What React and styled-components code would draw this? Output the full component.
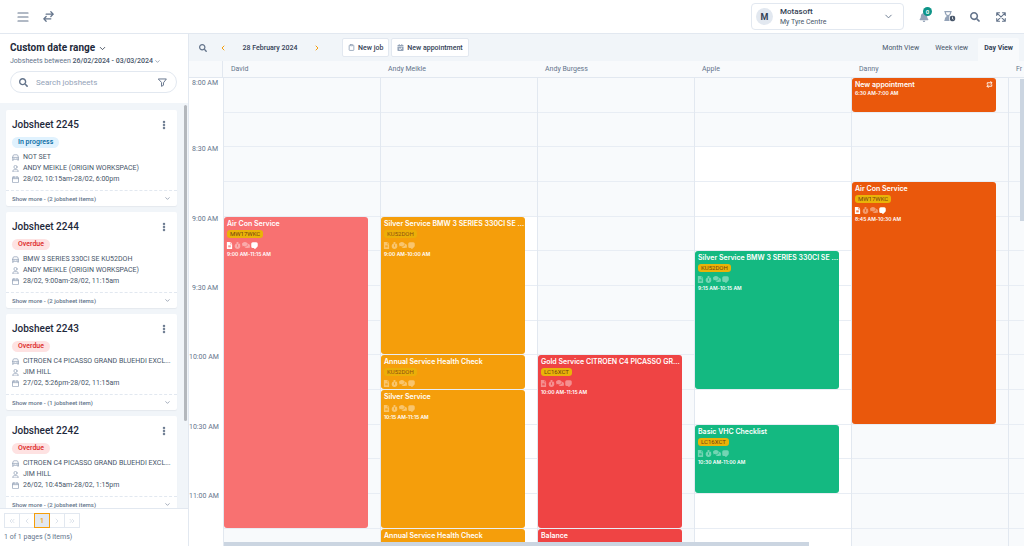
import React from 'react';
import styled, { createGlobalStyle } from 'styled-components';
import {
  FaSearch,
  FaBell,
  FaFileAlt,
  FaComments,
  FaCalendarCheck,
  FaStopwatch,
  FaHourglassEnd,
  FaClock,
} from 'react-icons/fa';
import {
  ChevronDown,
  ChevronLeft,
  ChevronRight,
  ChevronsLeft,
  ChevronsRight,
  Clipboard,
  EllipsisVertical,
} from 'lucide-react';

const colors = {
  text: '#334155',
  muted: '#64748b',
  light: '#94a3b8',
  line: '#e2e8f0',
  panel: '#f1f5f9',
  page: '#f8fafc',
  accent: '#f59e0b',
};

const GlobalStyle = createGlobalStyle`
  * {
    box-sizing: border-box;
  }
  body {
    margin: 0;
    font-family: Roboto, 'Liberation Sans', sans-serif;
    font-size: 7px;
    color: ${colors.text};
    background: #fff;
  }
  button, input {
    font: inherit;
    color: inherit;
    padding: 0;
    border: 0;
    background: none;
  }
  h1, h2, p {
    margin: 0;
  }
  svg {
    display: block;
    flex: none;
  }
`;

const Root = styled.div`
  display: flex;
  flex-direction: column;
  height: 100vh;
  overflow: hidden;
`;

const Topbar = styled.header`
  display: flex;
  align-items: center;
  flex: none;
  height: 34px;
  padding: 0 18px 0 17px;
  border-bottom: 1px solid ${colors.line};
`;

const IconButton = styled.button`
  display: flex;
  align-items: center;
  justify-content: center;
  color: ${p => p.$color || colors.muted};
  margin-left: ${p => p.$gap || 0}px;
`;

const Workspace = styled.button`
  display: flex;
  align-items: center;
  width: 153px;
  height: 27px;
  margin-left: auto;
  padding: 0 9px 0 4px;
  text-align: left;
  border: 1px solid ${colors.line};
  border-radius: 4px;
`;

const Avatar = styled.span`
  display: flex;
  align-items: center;
  justify-content: center;
  width: 17px;
  height: 17px;
  margin-right: 7px;
  border-radius: 50%;
  background: ${colors.line};
  font-size: 9px;
  font-weight: 700;
`;

const WorkspaceText = styled.span`
  display: flex;
  flex: 1;
  flex-direction: column;
  line-height: 10px;
`;

const WorkspaceName = styled.span`
  font-size: 8px;
  font-weight: 500;
`;

const WorkspaceBranch = styled.span`
  font-size: 7px;
  color: #475569;
`;

const BellWrap = styled.span`
  position: relative;
  color: ${colors.light};
`;

const BellBadge = styled.span`
  position: absolute;
  top: -5px;
  left: 4px;
  width: 9px;
  height: 9px;
  border-radius: 50%;
  background: #0d9488;
  color: #fff;
  font-size: 6px;
  font-weight: 600;
  line-height: 9px;
  text-align: center;
`;

const Body = styled.div`
  display: flex;
  flex: 1;
  min-height: 0;
`;

const Sidebar = styled.aside`
  display: flex;
  flex-direction: column;
  flex: none;
  width: 189px;
  border-right: 1px solid ${colors.line};
`;

const SidebarHead = styled.div`
  padding: 7px 11px 10px 10px;
`;

const RangeTitle = styled.h1`
  display: flex;
  align-items: center;
  gap: 3px;
  font-size: 10px;
  font-weight: 700;
  line-height: 14px;
  color: #1e293b;
`;

const RangeText = styled.p`
  display: flex;
  align-items: center;
  gap: 1px;
  margin-bottom: 3px;
  line-height: 13px;
  white-space: pre;
  color: ${colors.muted};

  b {
    font-weight: 500;
    color: #475569;
  }
`;

const SearchBox = styled.label`
  display: flex;
  align-items: center;
  gap: 8px;
  height: 22px;
  padding: 0 9px 0 8px;
  border: 1px solid ${colors.line};
  border-radius: 11px;
  color: ${colors.muted};
`;

const SearchInput = styled.input`
  flex: 1;
  min-width: 0;
  font-size: 8px;
  outline: none;

  &::placeholder {
    color: ${colors.light};
  }
`;

const ListArea = styled.div`
  display: flex;
  flex: 1;
  min-height: 0;
  background: ${colors.panel};
`;

const List = styled.div`
  display: flex;
  flex: 1;
  flex-direction: column;
  gap: 6px;
  min-width: 0;
  padding: 7px 7px 0 6px;
  overflow: hidden;
`;

const ListThumb = styled.div`
  width: 3px;
  height: 78%;
  margin: 2px 1px 0 0;
  border-radius: 2px;
  background: #b4b8bd;
`;

const Card = styled.article`
  flex: none;
  background: #fff;
  border-radius: 2px;
  box-shadow: 0 1px 1px rgba(15, 23, 42, 0.05);
`;

const CardBody = styled.div`
  padding: 8px 6px 5px;
`;

const CardHead = styled.div`
  display: flex;
  align-items: center;
  justify-content: space-between;
  padding-right: 2px;
`;

const CardTitle = styled.h2`
  font-size: 10px;
  font-weight: 500;
  line-height: 14px;
  color: #1e293b;
`;

const Badge = styled.span`
  display: block;
  width: fit-content;
  margin: 5px 0 4px;
  padding: 0 6px;
  border-radius: 6px;
  font-size: 7px;
  font-weight: 500;
  line-height: 11px;
  color: ${p => (p.$overdue ? '#dc2626' : '#0369a1')};
  background: ${p => (p.$overdue ? '#fee2e2' : '#e0f2fe')};
`;

const CardLine = styled.p`
  display: flex;
  align-items: center;
  gap: 4px;
  line-height: 11px;
  white-space: nowrap;
  color: #475569;

  svg {
    color: ${colors.light};
  }
`;

const ShowMore = styled.button`
  display: flex;
  align-items: center;
  justify-content: space-between;
  width: 100%;
  height: 16px;
  padding: 0 6px;
  border-top: 1px dashed ${colors.line};
  font-size: 6px;
  font-weight: 500;
  color: ${colors.muted};
`;

const SidebarFoot = styled.footer`
  flex: none;
  padding: 4px 4px 3px;
  border-top: 1px solid ${colors.line};
  line-height: 12px;
  color: ${colors.muted};
`;

const Pages = styled.nav`
  display: flex;
  margin-bottom: 3px;
`;

const PageButton = styled.button`
  display: flex;
  align-items: center;
  justify-content: center;
  width: 16px;
  height: 15px;
  margin-right: -1px;
  border: 1px solid ${p => (p.$active ? colors.accent : colors.line)};
  background: ${p => (p.$active ? colors.line : '#fff')};
  color: ${p => (p.$active ? colors.accent : '#cbd5e1')};
  font-weight: 500;
  z-index: ${p => (p.$active ? 1 : 0)};
`;

const Main = styled.main`
  position: relative;
  display: flex;
  flex: 1;
  flex-direction: column;
  min-width: 0;
  overflow: hidden;
`;

const Toolbar = styled.div`
  display: flex;
  align-items: center;
  flex: none;
  height: 27px;
  padding: 0 5px 0 10px;
  background: ${colors.panel};
`;

const DateText = styled.span`
  width: 86px;
  font-weight: 500;
  text-align: center;
`;

const ActionButton = styled.button`
  display: flex;
  align-items: center;
  gap: 3px;
  height: 19px;
  margin-left: ${p => p.$gap}px;
  padding: 0 5px;
  border: 1px solid ${colors.line};
  border-radius: 2px;
  background: #fff;
  font-weight: 500;
  white-space: nowrap;

  svg {
    color: ${colors.light};
  }
`;

const Tabs = styled.div`
  display: flex;
  align-self: flex-end;
  margin-left: auto;
`;

const Tab = styled.button`
  height: 23px;
  padding: 0 6px 4px;
  margin-left: 4px;
  border-radius: 2px 2px 0 0;
  font-weight: ${p => (p.$active ? 700 : 400)};
  color: ${p => (p.$active ? colors.text : '#475569')};
  background: ${p => (p.$active ? colors.page : 'transparent')};
`;

const HeadRow = styled.div`
  display: flex;
  flex: none;
  height: 17px;
  border-bottom: 1px solid ${colors.line};
  background: ${colors.page};
`;

const HeadCell = styled.div`
  flex: 0 0 157px;
  padding-left: 8px;
  line-height: 17px;
  color: ${colors.muted};
`;

const HeadCorner = styled.div`
  flex: none;
  width: 34px;
  border-right: 1px solid ${colors.line};
`;

const Grid = styled.div`
  display: flex;
  flex: 1;
  min-height: 0;
  overflow: hidden;
`;

// three quarter-hour slots take 104px
const SlotColumn = styled.div`
  display: grid;
  grid-template-columns: minmax(0, 1fr);
  grid-template-rows: repeat(5, 35px 34px 35px);
  align-content: start;
`;

const TimeColumn = styled(SlotColumn)`
  flex: none;
  width: 34px;
`;

const TimeLabel = styled.div`
  grid-column: 1;
  grid-row: ${p => p.$row};
  margin-top: ${p => (p.$row === 1 ? 0 : -3)}px;
  padding-right: 5px;
  line-height: 10px;
  text-align: right;
  white-space: nowrap;
  color: ${colors.muted};
`;

const DayColumn = styled(SlotColumn)`
  flex: 0 0 157px;
  border-left: 1px solid ${colors.line};
`;

const Slot = styled.div`
  grid-column: 1;
  grid-row: ${p => p.$row};
  border-bottom: 1px solid #e8edf4;
  background: ${p => (p.$open ? '#fff' : colors.page)};
`;

const Event = styled.article`
  grid-column: 1;
  grid-row: ${p => p.$from} / ${p => p.$to};
  z-index: 1;
  min-height: 0;
  margin: 0 12px 1px 0;
  padding: 2px 3px 0;
  overflow: hidden;
  border-radius: 3px;
  background: ${p => p.$color};
  color: #fff;
  font-family: Inter, 'Liberation Sans', sans-serif;
  white-space: nowrap;
`;

const EventTitle = styled.h2`
  display: flex;
  align-items: center;
  justify-content: space-between;
  font-size: 7px;
  font-weight: 600;
  line-height: 9px;
`;

const Plate = styled.span`
  display: block;
  width: fit-content;
  margin-top: 2px;
  padding: 0 3px;
  border-radius: 3px;
  background: #eab308;
  color: #713f12;
  font-family: Roboto, 'Liberation Sans', sans-serif;
  font-size: 6px;
  line-height: 8px;
  opacity: ${p => (p.$dim ? 0.8 : 1)};
`;

const EventIcons = styled.div`
  display: flex;
  gap: 1px;
  margin: 3px 0 1px -1px;
`;

const EventIcon = styled.span`
  display: flex;
  align-items: center;
  opacity: ${p => (p.$on ? 1 : 0.4)};
`;

const EventTime = styled.p`
  font-size: 5px;
  font-weight: 600;
  line-height: 8px;
`;

const BottomThumb = styled.div`
  position: absolute;
  bottom: 0;
  left: 35px;
  z-index: 2;
  width: 70%;
  height: 4px;
  background: #cbd5e1;
`;

const SideThumb = styled.div`
  position: absolute;
  top: 45px;
  right: 0;
  z-index: 2;
  width: 4px;
  height: 142px;
  background: #cbd5e1;
`;

const Stroke = ({ size = 7, box = 14, width = 1.2, children }) => (
  <svg
    width={size}
    height={size}
    viewBox={`0 0 ${box} ${box}`}
    fill="none"
    stroke="currentColor"
    strokeWidth={width}
    strokeLinecap="round"
    strokeLinejoin="round"
  >
    {children}
  </svg>
);

const MenuIcon = () => (
  <Stroke size={12} box={12}>
    <path d="M1 2h10M1 6h10M1 10h10" />
  </Stroke>
);

const SwapIcon = () => (
  <Stroke size={11} box={14} width={1.6}>
    <path d="M4 4h9M10 1l3 3-3 3M10 10H1M4 7l-3 3 3 3" />
  </Stroke>
);

const FilterIcon = () => (
  <Stroke size={9} width={1.5}>
    <path d="M1 1.5h12L8.5 7.5v3.8L5.5 13V7.5z" />
  </Stroke>
);

const ExpandIcon = () => (
  <Stroke size={10} width={1.5}>
    <path d="M1 5V1h4M9 1h4v4M13 9v4H9M5 13H1V9M1.5 1.5l11 11M12.5 1.5l-11 11" />
  </Stroke>
);

const CarIcon = () => (
  <Stroke width={1.5}>
    <path d="M1 7l1.8-4.8Q3 1.6 3.8 1.6h6.4q.8 0 1 .6L13 7v5.4h-1.8v-1.8H2.8v1.8H1zM1.2 6.8h11.6M3.5 8.8h.6M9.9 8.8h.6" />
  </Stroke>
);

const UserIcon = () => (
  <Stroke width={1.5}>
    <circle cx="7" cy="4" r="3.2" />
    <path d="M1.8 13.2v-1.4q0-2.4 2.4-2.4h5.6q2.4 0 2.4 2.4v1.4z" />
  </Stroke>
);

const CalendarIcon = () => (
  <Stroke width={1.5}>
    <rect x="1" y="2.3" width="12" height="11" rx="1" />
    <path d="M1 5.3h12M4 .8v3M10 .8v3" />
  </Stroke>
);

const RepeatIcon = () => (
  <Stroke width={1.8}>
    <path d="M2.5 6.5V3.5h9M9.5 1l2.5 2.5L9.5 6M11.5 7.5v3h-9M4.5 8L2 10.5 4.5 13" />
  </Stroke>
);

const NoteIcon = () => (
  <svg width="7" height="7" viewBox="0 0 14 14" fill="currentColor">
    <path d="M3.5.5h7a3 3 0 0 1 3 3v5l-4.500 5H6.500l-1-1.500h-2a3 3 0 0 1-3-3v-5.500a3 3 0 0 1 3-3z" />
  </svg>
);

const HourglassIcon = () => (
  <svg width="12" height="11" viewBox="0 0 24 22">
    <FaHourglassEnd x="-2" size={20} color="#94a3b8" />
    <circle cx="17" cy="15" r="7" fill="#fff" />
    <FaClock x="11" y="9" size={12} color="#475569" />
  </svg>
);

const jobsheets = [
  { id: 2245, status: 'In progress', car: 'NOT SET', user: 'ANDY MEIKLE (ORIGIN WORKSPACE)', date: '28/02, 10:15am-28/02, 6:00pm', more: '2 jobsheet items' },
  { id: 2244, status: 'Overdue', car: 'BMW 3 SERIES 330CI SE KU52DOH', user: 'ANDY MEIKLE (ORIGIN WORKSPACE)', date: '28/02, 9:00am-28/02, 11:15am', more: '2 jobsheet items' },
  { id: 2243, status: 'Overdue', car: 'CITROEN C4 PICASSO GRAND BLUEHDI EXCL...', user: 'JIM HILL', date: '27/02, 5:26pm-28/02, 11:15am', more: '1 jobsheet item' },
  { id: 2242, status: 'Overdue', car: 'CITROEN C4 PICASSO GRAND BLUEHDI EXCL...', user: 'JIM HILL', date: '26/02, 10:45am-28/02, 1:15pm', more: '2 jobsheet items' },
];

const times = ['8:00 AM', '8:30 AM', '9:00 AM', '9:30 AM', '10:00 AM', '10:30 AM', '11:00 AM'];

// from / to are grid lines, one line every 15 minutes from 8:00
const days = [
  {
    name: 'David',
    events: [
      { title: 'Air Con Service', plate: 'MW17WKC', time: '9:00 AM-11:15 AM', from: 5, to: 14, color: '#f87171', icons: true, sent: true },
    ],
  },
  {
    name: 'Andy Meikle',
    open: 5,
    events: [
      { title: 'Silver Service BMW 3 SERIES 330CI SE ...', plate: 'KU52DOH', dim: true, time: '9:00 AM-10:00 AM', from: 5, to: 9, color: '#f59e0b', icons: true },
      { title: 'Annual Service Health Check', plate: 'KU52DOH', dim: true, from: 9, to: 10, color: '#f59e0b', icons: true },
      { title: 'Silver Service', time: '10:15 AM-11:15 AM', from: 10, to: 14, color: '#f59e0b', icons: true },
      { title: 'Annual Service Health Check', from: 14, to: 16, color: '#f59e0b' },
    ],
  },
  {
    name: 'Andy Burgess',
    events: [
      { title: 'Gold Service CITROEN C4 PICASSO GR...', plate: 'LC16XCT', time: '10:00 AM-11:15 AM', from: 9, to: 14, color: '#ef4444', icons: true },
      { title: 'Balance', from: 14, to: 16, color: '#ef4444' },
    ],
  },
  {
    name: 'Apple',
    open: 3,
    events: [
      { title: 'Silver Service BMW 3 SERIES 330CI SE ...', plate: 'KU52DOH', time: '9:15 AM-10:15 AM', from: 6, to: 10, color: '#14b981', icons: true },
      { title: 'Basic VHC Checklist', plate: 'LC16XCT', time: '10:30 AM-11:00 AM', from: 11, to: 13, color: '#14b981', icons: true },
    ],
  },
  {
    name: 'Danny',
    events: [
      { title: 'New appointment', time: '6:30 AM-7:00 AM', from: 1, to: 2, color: '#ea580c', repeat: true },
      { title: 'Air Con Service', plate: 'MW17WKC', time: '8:45 AM-10:30 AM', from: 4, to: 11, color: '#ea580c', icons: true, sent: true },
    ],
  },
  { name: 'Fr', events: [] },
];

const slots = Array.from({ length: 15 }, (_, i) => i + 1);

const Jobsheet = ({ sheet }) => (
  <Card>
    <CardBody>
      <CardHead>
        <CardTitle>Jobsheet {sheet.id}</CardTitle>
        <IconButton aria-label="Options">
          <EllipsisVertical size={10} strokeWidth={4} />
        </IconButton>
      </CardHead>
      <Badge $overdue={sheet.status === 'Overdue'}>{sheet.status}</Badge>
      <CardLine><CarIcon />{sheet.car}</CardLine>
      <CardLine><UserIcon />{sheet.user}</CardLine>
      <CardLine><CalendarIcon />{sheet.date}</CardLine>
    </CardBody>
    <ShowMore>
      Show more - ({sheet.more})
      <ChevronDown size={7} />
    </ShowMore>
  </Card>
);

const CalendarEvent = ({ event }) => (
  <Event $from={event.from} $to={event.to} $color={event.color}>
    <EventTitle>
      {event.title}
      {event.repeat && <RepeatIcon />}
    </EventTitle>
    {event.plate && <Plate $dim={event.dim}>{event.plate}</Plate>}
    {event.icons && (
      <EventIcons>
        <EventIcon $on={event.sent}><FaFileAlt size={7} /></EventIcon>
        <EventIcon><FaStopwatch size={7} /></EventIcon>
        <EventIcon><FaComments size={8} /></EventIcon>
        <EventIcon $on={event.sent}><NoteIcon /></EventIcon>
      </EventIcons>
    )}
    {event.time && <EventTime>{event.time}</EventTime>}
  </Event>
);

const App = () => (
  <Root>
    <GlobalStyle />
    <Topbar>
      <IconButton aria-label="Menu"><MenuIcon /></IconButton>
      <IconButton aria-label="Switch" $gap={14}><SwapIcon /></IconButton>
      <Workspace>
        <Avatar>M</Avatar>
        <WorkspaceText>
          <WorkspaceName>Motasoft</WorkspaceName>
          <WorkspaceBranch>My Tyre Centre</WorkspaceBranch>
        </WorkspaceText>
        <ChevronDown size={11} color={colors.muted} />
      </Workspace>
      <IconButton aria-label="Notifications" $gap={15}>
        <BellWrap>
          <FaBell size={10} />
          <BellBadge>0</BellBadge>
        </BellWrap>
      </IconButton>
      <IconButton aria-label="Timers" $gap={15}><HourglassIcon /></IconButton>
      <IconButton aria-label="Search" $gap={14}><FaSearch size={10} /></IconButton>
      <IconButton aria-label="Fullscreen" $gap={16}><ExpandIcon /></IconButton>
    </Topbar>
    <Body>
      <Sidebar>
        <SidebarHead>
          <RangeTitle>
            Custom date range
            <ChevronDown size={9} />
          </RangeTitle>
          <RangeText>
            <span>Jobsheets between <b>26/02/2024 - 03/03/2024</b></span>
            <ChevronDown size={7} />
          </RangeText>
          <SearchBox>
            <FaSearch size={9} />
            <SearchInput placeholder="Search jobsheets" aria-label="Search jobsheets" />
            <FilterIcon />
          </SearchBox>
        </SidebarHead>
        <ListArea>
          <List>
            {jobsheets.map(sheet => <Jobsheet key={sheet.id} sheet={sheet} />)}
          </List>
          <ListThumb />
        </ListArea>
        <SidebarFoot>
          <Pages>
            <PageButton aria-label="First"><ChevronsLeft size={8} /></PageButton>
            <PageButton aria-label="Previous"><ChevronLeft size={8} /></PageButton>
            <PageButton $active>1</PageButton>
            <PageButton aria-label="Next"><ChevronRight size={8} /></PageButton>
            <PageButton aria-label="Last"><ChevronsRight size={8} /></PageButton>
          </Pages>
          1 of 1 pages (5 items)
        </SidebarFoot>
      </Sidebar>
      <Main>
        <Toolbar>
          <IconButton aria-label="Search"><FaSearch size={8} /></IconButton>
          <IconButton aria-label="Previous day" $gap={12} $color={colors.accent}>
            <ChevronLeft size={8} strokeWidth={3} />
          </IconButton>
          <DateText>28 February 2024</DateText>
          <IconButton aria-label="Next day" $color={colors.accent}>
            <ChevronRight size={8} strokeWidth={3} />
          </IconButton>
          <ActionButton $gap={21}><Clipboard size={7} strokeWidth={3} />New job</ActionButton>
          <ActionButton $gap={2}><FaCalendarCheck size={7} />New appointment</ActionButton>
          <Tabs>
            <Tab>Month View</Tab>
            <Tab>Week view</Tab>
            <Tab $active>Day View</Tab>
          </Tabs>
        </Toolbar>
        <HeadRow>
          <HeadCorner />
          {days.map(day => <HeadCell key={day.name}>{day.name}</HeadCell>)}
        </HeadRow>
        <Grid>
          <TimeColumn>
            {times.map((time, i) => <TimeLabel key={time} $row={i * 2 + 1}>{time}</TimeLabel>)}
          </TimeColumn>
          {days.map(day => (
            <DayColumn key={day.name}>
              {slots.map(row => <Slot key={row} $row={row} $open={row >= day.open} />)}
              {day.events.map(event => <CalendarEvent key={event.from} event={event} />)}
            </DayColumn>
          ))}
        </Grid>
        <BottomThumb />
        <SideThumb />
      </Main>
    </Body>
  </Root>
);

export default App;
